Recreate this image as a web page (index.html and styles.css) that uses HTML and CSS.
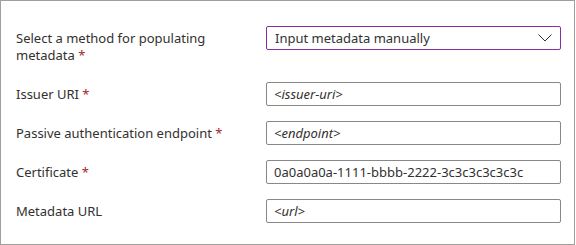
FILE: index.html
```html
<!DOCTYPE html>
<html lang="en">
<head>
<meta charset="utf-8">
<title>Metadata</title>
<link rel="stylesheet" href="styles.css">
</head>
<body>
<div class="panel">
  <div class="form">
    <div class="label label-multi">Select a method for populating metadata <span class="req">*</span></div>
    <div class="field select">
      <span class="value">Input metadata manually</span>
      <svg class="chev" width="14" height="8" viewBox="0 0 14 8"><path d="M0.5 0.5 L7 7 L13.5 0.5" fill="none" stroke="#323130" stroke-width="1"/></svg>
    </div>

    <div class="label">Issuer URI <span class="req">*</span></div>
    <div class="field"><span class="ph">&lt;issuer-uri&gt;</span></div>

    <div class="label">Passive authentication endpoint <span class="req">*</span></div>
    <div class="field"><span class="ph">&lt;endpoint&gt;</span></div>

    <div class="label">Certificate <span class="req">*</span></div>
    <div class="field"><span class="value">0a0a0a0a-1111-bbbb-2222-3c3c3c3c3c3c</span></div>

    <div class="label">Metadata URL</div>
    <div class="field"><span class="ph">&lt;url&gt;</span></div>
  </div>
</div>
</body>
</html>
```
FILE: styles.css
```css
* { box-sizing: border-box; }
html, body { margin: 0; padding: 0; background: #ffffff; }
body {
  font-family: "Segoe UI", "Noto Sans", "Open Sans", sans-serif;
  font-size: 13px;
  color: #323130;
}
.panel {
  width: 575px;
  height: 245px;
  border: 1px solid #a19f9d;
  padding: 25px 14px 0 15px;
}
.form {
  display: grid;
  grid-template-columns: 250px 295px;
  row-gap: 15px;
  align-items: center;
}
.label {
  line-height: 17px;
  color: #323130;
}
.label-multi {
  align-self: start;
  padding: 4px 0 3px;
  width: 200px;
}
.req { color: #a4262c; }
.field {
  height: 24px;
  border: 1px solid #8a8886;
  border-radius: 2px;
  padding: 0 8px 0 7px;
  display: flex;
  align-items: center;
  line-height: 20px;
}
.select {
  align-self: start;
  border-color: #8a2da5;
  justify-content: space-between;
  padding-right: 8px;
  padding-left: 8px;
}
.chev { display: block; }
.ph { font-style: italic; }
```
